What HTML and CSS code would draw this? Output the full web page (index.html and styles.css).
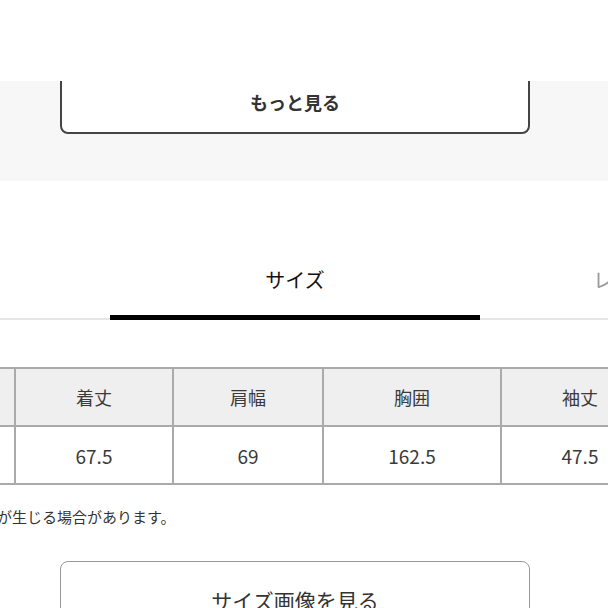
FILE: index.html
```html
<!DOCTYPE html>
<html lang="ja">
<head>
<meta charset="utf-8">
<link rel="stylesheet" href="styles.css">
</head>
<body>
<div class="topbar"></div>
<section class="more">
  <button class="more-btn">もっと見る</button>
</section>
<section class="size">
  <div class="tabbar">
    <div class="tab active">サイズ</div>
    <div class="tab next">レ</div>
  </div>
  <div class="table-wrap">
    <table class="size-table">
      <colgroup>
        <col class="c0"><col class="c1"><col class="c2"><col class="c3"><col class="c4">
      </colgroup>
      <thead>
        <tr><th></th><th>着丈</th><th>肩幅</th><th>胸囲</th><th>袖丈</th></tr>
      </thead>
      <tbody>
        <tr><td></td><td>67.5</td><td>69</td><td>162.5</td><td>47.5</td></tr>
      </tbody>
    </table>
  </div>
  <p class="note">が生じる場合があります。</p>
  <button class="img-btn">サイズ画像を見る</button>
</section>
</body>
</html>
```
FILE: styles.css
```css
html, body {
  margin: 0;
  padding: 0;
  background: #fff;
  font-family: "Noto Sans CJK JP", "Noto Sans", sans-serif;
  color: #333;
  overflow: hidden;
}
.topbar {
  position: absolute;
  top: 0;
  left: 0;
  right: 0;
  height: 81px;
  background: #fff;
  z-index: 2;
}
.more {
  background: #f7f7f7;
  padding: 70px 0 47px 60px;
}
.more-btn {
  display: block;
  box-sizing: border-box;
  width: 470px;
  height: 64px;
  background: #fff;
  border: 2px solid #444;
  border-radius: 8px;
  font-family: inherit;
  font-size: 18px;
  font-weight: 700;
  color: #333;
  padding: 0;
}
.tabbar {
  display: flex;
  margin-top: 85px;
  padding-left: 110px;
  border-bottom: 2px solid #e6e6e6;
  white-space: nowrap;
}
.tab {
  flex: none;
  font-size: 20px;
  line-height: 28px;
  padding-bottom: 21px;
  margin-bottom: -2px;
  border-bottom: 5px solid transparent;
}
.tab.active {
  width: 370px;
  text-align: center;
  color: #111;
  border-bottom-color: #000;
}
.tab.next {
  padding-left: 113px;
  color: #999;
}
.table-wrap {
  overflow: hidden;
  margin-top: 47px;
}
.size-table {
  border-collapse: collapse;
  table-layout: fixed;
  width: 804px;
  margin-left: -146px;
}
.c0 { width: 160px; }
.c1 { width: 158px; }
.c2 { width: 150px; }
.c3 { width: 178px; }
.c4 { width: 158px; }
.size-table th,
.size-table td {
  border: 2px solid #aaa;
  height: 56px;
  padding: 0;
  text-align: center;
  font-size: 18px;
  font-weight: 400;
  color: #3a3a3a;
}
.size-table th {
  background: #efefef;
}
.size-table td {
  background: #fff;
  font-size: 19px;
}
.note {
  margin: 21px 0 0 -3px;
  font-size: 15px;
  line-height: 22px;
  color: #333;
}
.img-btn {
  display: block;
  box-sizing: border-box;
  width: 470px;
  margin: 33px 0 0 60px;
  padding: 23px 0;
  background: #fff;
  border: 1.5px solid #999;
  border-radius: 8px;
  font-family: inherit;
  font-size: 21px;
  line-height: 30px;
  color: #333;
}
```
